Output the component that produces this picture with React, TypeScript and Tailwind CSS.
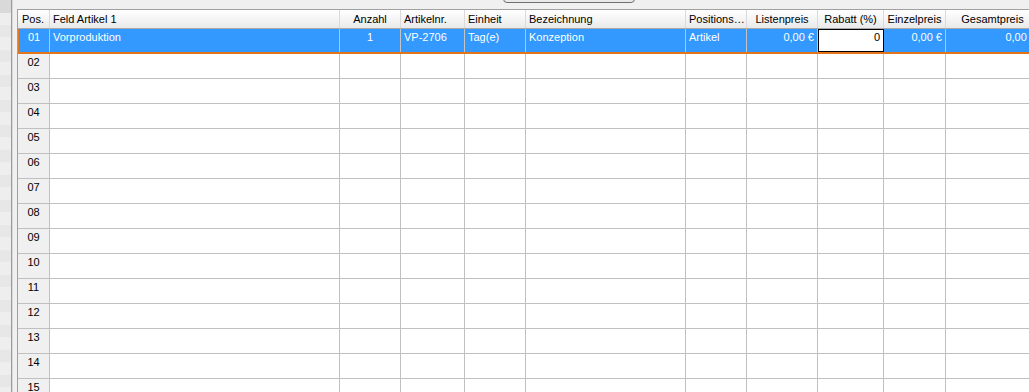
type Col = {
  label: string
  w: string
  head: string
  cell: string
}

const cols: Col[] = [
  { label: "Pos.", w: "w-[32px]", head: "justify-start pl-[4px]", cell: "justify-center" },
  { label: "Feld Artikel 1", w: "w-[290px]", head: "justify-start pl-[3px]", cell: "justify-start pl-[3px]" },
  { label: "Anzahl", w: "w-[61px]", head: "justify-center", cell: "justify-center" },
  { label: "Artikelnr.", w: "w-[64px]", head: "justify-start pl-[3px]", cell: "justify-start pl-[3px]" },
  { label: "Einheit", w: "w-[61px]", head: "justify-start pl-[3px]", cell: "justify-start pl-[3px]" },
  { label: "Bezeichnung", w: "w-[160px]", head: "justify-start pl-[3px]", cell: "justify-start pl-[3px]" },
  { label: "Positions…", w: "w-[61px]", head: "justify-start pl-[3px]", cell: "justify-start pl-[3px]" },
  { label: "Listenpreis", w: "w-[71px]", head: "justify-center", cell: "justify-end pr-[3px]" },
  { label: "Rabatt (%)", w: "w-[66px]", head: "justify-center", cell: "justify-end pr-[3px]" },
  { label: "Einzelpreis", w: "w-[62px]", head: "justify-center", cell: "justify-end pr-[3px]" },
  { label: "Gesamtpreis", w: "w-[94px]", head: "justify-center", cell: "justify-end pr-[3px]" },
]

const first = ["01", "Vorproduktion", "1", "VP-2706", "Tag(e)", "Konzeption", "Artikel", "0,00 €", "0", "0,00 €", "0,00 €"]

const rows = Array.from({ length: 14 }, (_, i) => String(i + 2).padStart(2, "0"))

export default function App() {
  return (
    <div className="flex h-[392px] w-[1029px] overflow-hidden bg-[#f0f0f0] font-['Liberation_Sans',sans-serif] text-[11px] text-black">
      {/* leftover of the neighbouring panel */}
      <div className="w-[11px] shrink-0 bg-[repeating-linear-gradient(to_bottom,#e7e7e7_0px,#e7e7e7_12px,#eeeeee_12px,#eeeeee_25px)]">
        <div className="h-[13px] bg-[#d9d9d9]" />
      </div>
      <div className="w-px shrink-0 bg-[#9c9c9c]" />
      <div className="w-px shrink-0 bg-[#d8d8d8]" />
      <div className="w-[4px] shrink-0" />

      <div className="flex min-w-0 flex-1 flex-col">
        <div className="h-[9px] shrink-0 overflow-hidden">
          <div className="ml-[486px] -mt-[16px] h-[19px] w-[132px] rounded-[4px] border border-[#707070] bg-[#e9e9e9]" />
        </div>

        <div className="flex-1 overflow-hidden border-l border-t border-[#a0a0a0] bg-white">
          {/* header */}
          <div className="flex h-[19px] border-b border-[#a8a8a8] bg-[linear-gradient(to_bottom,#ffffff,#f3f3f3_60%,#e9e9e9)]">
            {cols.map((c) => (
              <div key={c.label} className={`flex shrink-0 items-center whitespace-nowrap border-r border-[#dadada] ${c.w} ${c.head}`}>
                {c.label}
              </div>
            ))}
          </div>

          {/* selected row */}
          <div className="flex h-[25px] border-b-2 border-[#e3761b]">
            {cols.map((c, i) =>
              i === 8 ? (
                <div key={c.label} className={`flex shrink-0 items-start whitespace-nowrap border border-black bg-white pt-[1px] leading-[13px] ${c.w} ${c.cell}`}>
                  {first[i]}
                </div>
              ) : (
                <div
                  key={c.label}
                  className={`flex shrink-0 items-start whitespace-nowrap border-r border-[#c4c4c4] bg-[#3399ff] pt-[2px] leading-[13px] text-white ${c.w} ${c.cell} ${i === 0 ? "border-l border-l-[#e3761b]" : ""}`}
                >
                  {first[i]}
                </div>
              )
            )}
          </div>

          {rows.map((n) => (
            <div key={n} className="flex h-[25px] border-b border-[#c0c0c0]">
              {cols.map((c, i) => (
                <div
                  key={c.label}
                  className={`flex shrink-0 items-start border-r border-[#c0c0c0] pt-[2px] leading-[13px] ${c.w} ${c.cell} ${i === 0 ? "bg-[#f0f0f0] text-black" : ""}`}
                >
                  {i === 0 ? n : ""}
                </div>
              ))}
            </div>
          ))}
        </div>
      </div>
    </div>
  )
}
